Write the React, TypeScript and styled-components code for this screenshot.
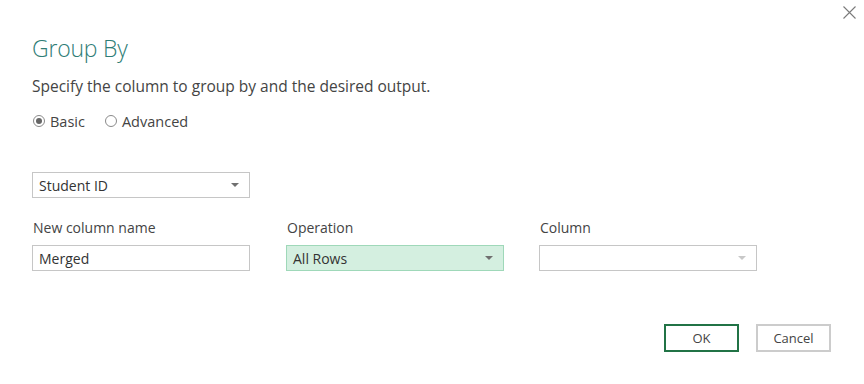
import styled, { createGlobalStyle } from "styled-components";

const GlobalStyle = createGlobalStyle`
  html, body {
    margin: 0;
    padding: 0;
    background: #ffffff;
  }
  body {
    font-family: "Open Sans", "Noto Sans", "Liberation Sans", sans-serif;
    color: #444444;
  }
`;

const Dialog = styled.div`
  position: relative;
  width: 864px;
  height: 384px;
  box-sizing: border-box;
  padding: 33px 32px 0 32px;
  background: #ffffff;
`;

const CloseButton = styled.button`
  position: absolute;
  top: 4px;
  right: 7px;
  width: 16px;
  height: 16px;
  padding: 0;
  border: none;
  background: transparent;
  display: flex;
  align-items: center;
  justify-content: center;
`;

const Title = styled.h1`
  margin: 0;
  font-size: 23px;
  font-weight: 300;
  line-height: 30px;
  color: #2f7d76;
  letter-spacing: -0.2px;
`;

const Subtitle = styled.p`
  margin: 13px 0 0 0;
  font-size: 15.5px;
  line-height: 20px;
  color: #444444;
`;

const RadioRow = styled.div`
  display: flex;
  align-items: center;
  gap: 20px;
  margin-top: 15px;
  height: 20px;
  padding-left: 1px;
`;

const RadioLabel = styled.label`
  display: flex;
  align-items: center;
  gap: 5px;
  font-size: 14.5px;
  color: #444444;
`;

const RadioDot = styled.span<{ $checked?: boolean }>`
  width: 12px;
  height: 12px;
  border-radius: 50%;
  border: 1px solid #8a8a8a;
  box-sizing: border-box;
  display: flex;
  align-items: center;
  justify-content: center;

  &::after {
    content: "";
    width: 6px;
    height: 6px;
    border-radius: 50%;
    background: ${(p) => (p.$checked ? "#666666" : "transparent")};
  }
`;

const KeyRow = styled.div`
  margin-top: 41px;
`;

const FieldsRow = styled.div`
  display: grid;
  grid-template-columns: 218px 218px 218px;
  column-gap: 36px;
  margin-top: 20px;
`;

const Field = styled.div<{ $shift?: number }>`
  display: flex;
  flex-direction: column;
  gap: 8px;
  margin-left: ${(p) => p.$shift ?? 0}px;
`;

const FieldLabel = styled.span`
  font-size: 14px;
  line-height: 19px;
  color: #444444;
  padding-left: 1px;
`;

const Box = styled.div<{ $variant?: "plain" | "active" | "empty" }>`
  width: 218px;
  height: 26px;
  box-sizing: border-box;
  display: flex;
  align-items: center;
  justify-content: space-between;
  padding: 0 10px 0 6px;
  font-size: 14px;
  color: #333333;
  border: 1px solid
    ${(p) => (p.$variant === "active" ? "#9fd8b9" : "#c6c6c6")};
  background: ${(p) => (p.$variant === "active" ? "#d4efe0" : "#ffffff")};
`;

const Caret = styled.span<{ $dim?: boolean }>`
  width: 0;
  height: 0;
  border-left: 4px solid transparent;
  border-right: 4px solid transparent;
  border-top: 4px solid ${(p) => (p.$dim ? "#c8c8c8" : "#707070")};
`;

const Footer = styled.div`
  display: flex;
  justify-content: flex-end;
  gap: 17px;
  margin-top: 53px;
  padding-right: 1px;
`;

const Button = styled.button<{ $primary?: boolean }>`
  width: 75px;
  height: 28px;
  box-sizing: border-box;
  background: #ffffff;
  font-family: inherit;
  font-size: 13px;
  color: #444444;
  border: ${(p) => (p.$primary ? "2px solid #217346" : "2px solid #cccccc")};
`;

export default function App() {
  return (
    <>
      <GlobalStyle />
      <Dialog>
        <CloseButton aria-label="Close">
          <svg width="13" height="13" viewBox="0 0 13 13">
            <path d="M0.5 0.5 L12.5 12.5 M12.5 0.5 L0.5 12.5" stroke="#7a7a7a" strokeWidth="1.1" />
          </svg>
        </CloseButton>
        <Title>Group By</Title>
        <Subtitle>Specify the column to group by and the desired output.</Subtitle>
        <RadioRow>
          <RadioLabel>
            <RadioDot $checked />
            Basic
          </RadioLabel>
          <RadioLabel>
            <RadioDot />
            Advanced
          </RadioLabel>
        </RadioRow>
        <KeyRow>
          <Box>
            Student ID
            <Caret />
          </Box>
        </KeyRow>
        <FieldsRow>
          <Field>
            <FieldLabel>New column name</FieldLabel>
            <Box>Merged</Box>
          </Field>
          <Field>
            <FieldLabel>Operation</FieldLabel>
            <Box $variant="active">
              All Rows
              <Caret />
            </Box>
          </Field>
          <Field $shift={-1}>
            <FieldLabel>Column</FieldLabel>
            <Box $variant="empty">
              <span />
              <Caret $dim />
            </Box>
          </Field>
        </FieldsRow>
        <Footer>
          <Button $primary>OK</Button>
          <Button>Cancel</Button>
        </Footer>
      </Dialog>
    </>
  );
}
